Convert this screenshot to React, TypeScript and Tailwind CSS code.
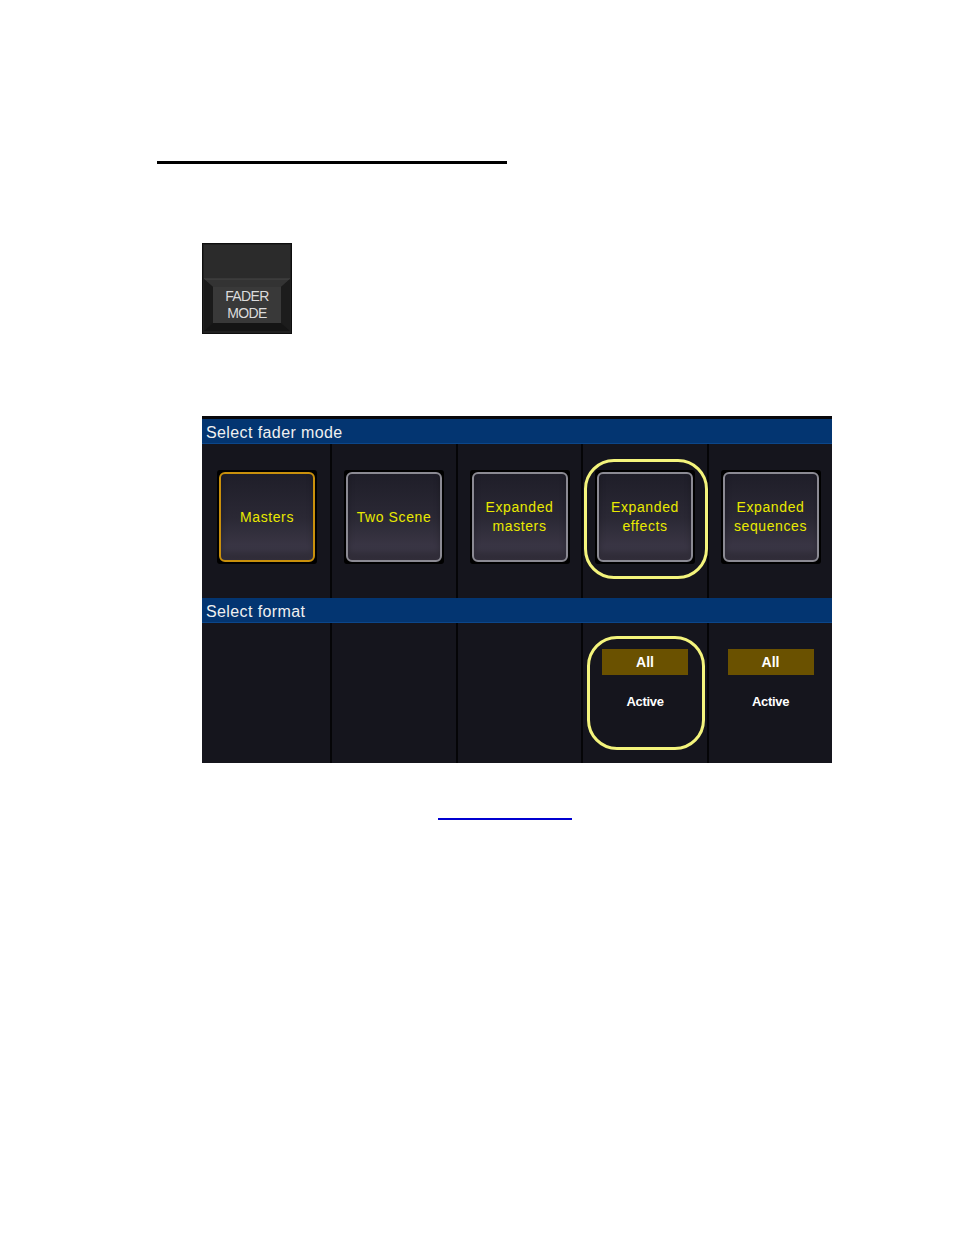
import React from 'react';

const font = { fontFamily: '"Liberation Sans", Arial, sans-serif' };

// One soft-key on the touchscreen
function ModeButton({ lines, active }: { lines: string[]; active?: boolean }) {
  return (
    <div className="bg-black p-[2px] rounded-[3px]">
      <div
        className={`w-[96px] h-[90px] rounded-[6px] border-2 flex flex-col items-center justify-center bg-gradient-to-b from-[#1f1e29] via-[#2a2834] to-[#413c4c] shadow-[inset_0_-8px_6px_rgba(0,0,0,0.25)] ${
          active ? 'border-[#c9900c]' : 'border-[#8b8a93]'
        }`}
      >
        {lines.map((l) => (
          <span key={l} className="text-[14px] leading-[19px] tracking-[0.6px] text-[#e9e900]">
            {l}
          </span>
        ))}
      </div>
    </div>
  );
}

function Header({ title }: { title: string }) {
  return (
    <div className="h-[25px] bg-[#033571] border-b border-[#0b468a] flex items-center pl-[4px] pt-[3px]">
      <span className="text-[16px] text-[#f0f0f0] tracking-[0.4px]">{title}</span>
    </div>
  );
}

function FaderKey() {
  return (
    <div className="relative w-[90px] h-[91px]">
      <svg width="90" height="91" viewBox="0 0 90 91" className="absolute inset-0">
        <rect x="0" y="0" width="90" height="91" fill="#0e0e0e" />
        <rect x="1" y="1" width="88" height="89" fill="#202020" />
        <rect x="2" y="2" width="86" height="34" fill="#2b2b2b" />
        {/* upper bevel */}
        <polygon points="2,36 88,36 79,44 11,44" fill="#333333" />
        <line x1="2" y1="36" x2="88" y2="36" stroke="#464646" strokeWidth="1" />
        {/* side bevels */}
        <polygon points="2,36 11,44 11,80 2,88" fill="#1a1a1a" />
        <polygon points="88,36 79,44 79,80 88,88" fill="#1c1c1c" />
        {/* lower bevel */}
        <polygon points="2,88 11,80 79,80 88,88" fill="#151515" />
        {/* key face */}
        <rect x="11" y="44" width="68" height="36" fill="#393939" />
      </svg>
      <div
        className="absolute left-[11px] top-[44px] w-[68px] h-[36px] flex flex-col items-center justify-center text-[#dcdcdc] text-[14px] leading-[17px] tracking-[-0.6px]"
        style={font}
      >
        <span>FADER</span>
        <span>MODE</span>
      </div>
    </div>
  );
}

const cols = ['w-[128px]', 'w-[124px]', 'w-[123px]', 'w-[124px]', 'flex-1'];

export default function App() {
  const buttons = [
    { lines: ['Masters'], active: true },
    { lines: ['Two Scene'] },
    { lines: ['Expanded', 'masters'] },
    { lines: ['Expanded', 'effects'] },
    { lines: ['Expanded', 'sequences'] },
  ];

  return (
    <div className="w-[954px] h-[1235px] bg-white overflow-hidden" style={font}>
      {/* Rule */}
      <div className="mt-[161px] ml-[157px] w-[350px] h-[3px] bg-black" />

      {/* Fader mode hard key */}
      <div className="mt-[79px] ml-[202px]">
        <FaderKey />
      </div>

      {/* Touchscreen capture */}
      <div className="mt-[82px] ml-[202px] w-[630px] h-[347px] bg-[#08080c] pt-[3px] flex flex-col">
        <Header title="Select fader mode" />
        <div className="flex gap-[2px] h-[154px] bg-[#050507]">
          {buttons.map((b, i) => (
            <div
              key={i}
              className={`${cols[i]} relative bg-[#15151d] flex justify-center items-start pt-[26px] ${i === 0 ? 'pl-[2px]' : ''}`}
            >
              <ModeButton lines={b.lines} active={b.active} />
              {i === 3 && (
                <div className="absolute left-[1px] top-[15px] w-[124px] h-[120px] rounded-[30px] border-[3px] border-[#f4f47c]" />
              )}
            </div>
          ))}
        </div>
        <Header title="Select format" />
        <div className="flex gap-[2px] flex-1 bg-[#050507]">
          {cols.map((c, i) => (
            <div key={i} className={`${c} relative bg-[#15151d] flex flex-col items-center`}>
              {i >= 3 && (
                <>
                  <div className="mt-[26px] w-[86px] h-[26px] bg-[#6a5100] flex items-center justify-center">
                    <span className="text-white font-bold text-[14px]">All</span>
                  </div>
                  <span className="mt-[17px] text-white font-bold text-[13px] tracking-[-0.3px]">Active</span>
                </>
              )}
              {i === 3 && (
                <div className="absolute left-[4px] top-[13px] w-[118px] h-[114px] rounded-[30px] border-[3px] border-[#f4f47c]" />
              )}
            </div>
          ))}
        </div>
      </div>

      {/* Link underline */}
      <div className="mt-[55px] ml-[438px] w-[134px] h-[1.5px] bg-[#0000d0]" />
    </div>
  );
}
